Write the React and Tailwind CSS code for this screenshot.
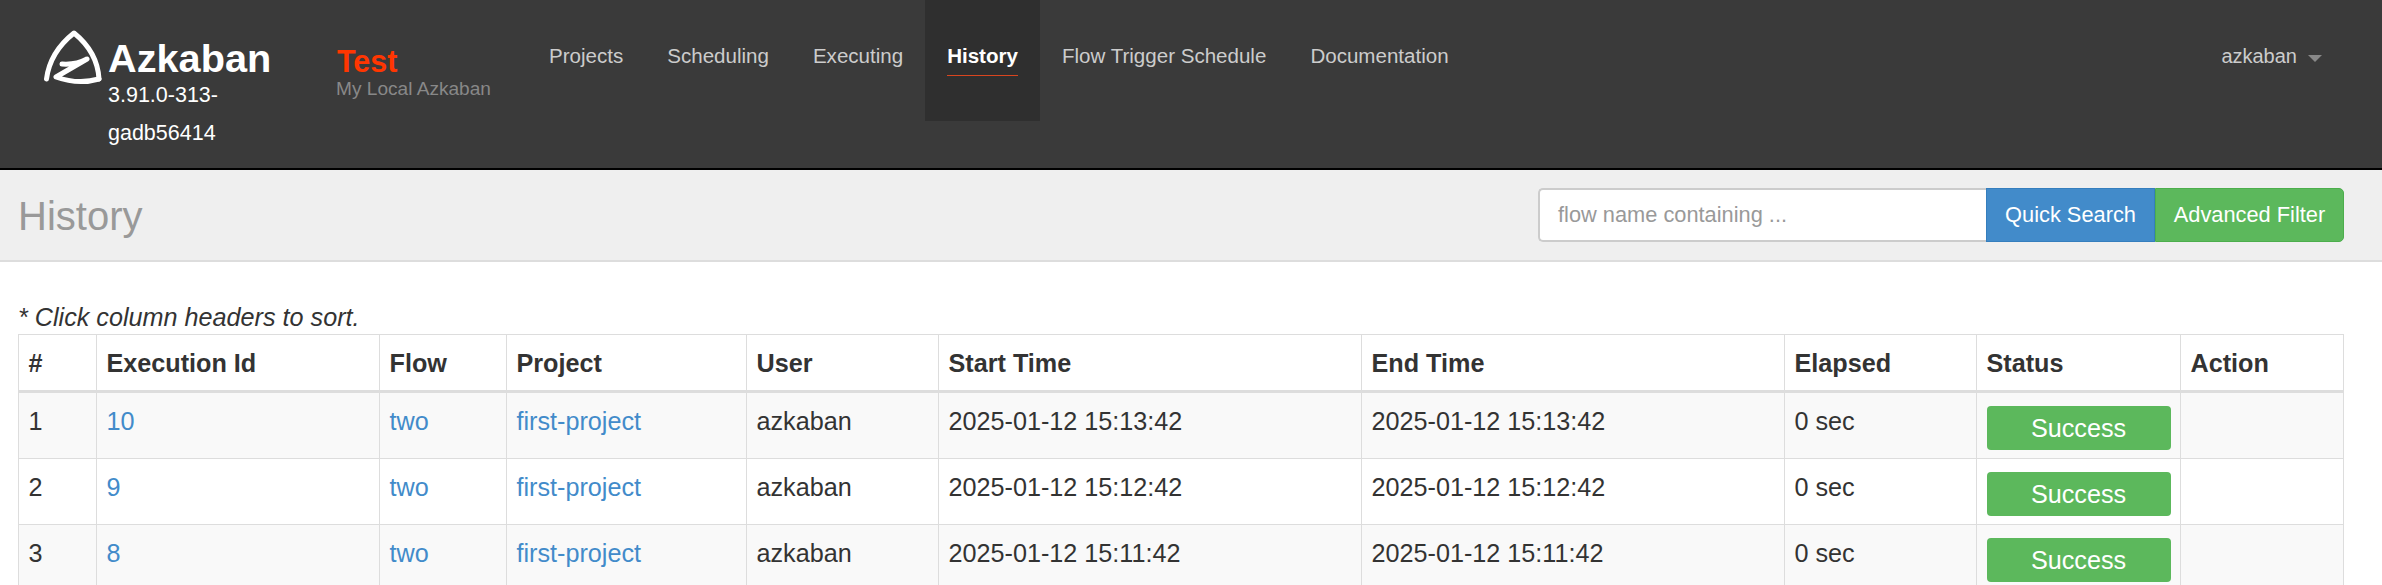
const font = { fontFamily: '"Liberation Sans", Arial, sans-serif' };

const NAV = [
  ['Projects', false],
  ['Scheduling', false],
  ['Executing', false],
  ['History', true],
  ['Flow Trigger Schedule', false],
  ['Documentation', false],
];

const COLS = [
  ['#', 'w-[78px]'],
  ['Execution Id', 'w-[283px]'],
  ['Flow', 'w-[127px]'],
  ['Project', 'w-[240px]'],
  ['User', 'w-[192px]'],
  ['Start Time', 'w-[423px]'],
  ['End Time', 'w-[423px]'],
  ['Elapsed', 'w-[192px]'],
  ['Status', 'w-[204px]'],
  ['Action', 'w-[163px]'],
];

const ROWS = [
  [1, 10, '2025-01-12 15:13:42'],
  [2, 9, '2025-01-12 15:12:42'],
  [3, 8, '2025-01-12 15:11:42'],
];

function Logo() {
  return (
    <svg width="70" height="70" viewBox="30 20 70 70" fill="none" stroke="#fff" strokeWidth="5" strokeLinecap="round" strokeLinejoin="round" className="blur-[0.6px]">
      <path d="M40.5 75 Q44 48 68 29 Q91.5 48 93 75" />
      <path d="M56 60 Q70 61 81 55 L50 73 Q72 81 93 75" />
    </svg>
  );
}

function Cell({ children, className = '' }) {
  return <td className={`border border-[#ddd] px-[9.5px] pt-[12px] align-top h-[66.5px] ${className}`}>{children}</td>;
}

export default function App() {
  return (
    <div style={font} className="h-[585px] w-[2382px] overflow-hidden bg-white text-[#333]">
      <header className="flex h-[170px] items-start border-b-2 border-black bg-[#3a3a3a]">
        <div className="flex w-[336px] shrink-0 pl-[36px] pt-[24px]">
          <div className="w-[72px] shrink-0"><Logo /></div>
          <div className="w-[130px] pt-[17px] text-white">
            <div className="text-[39.7px] font-bold leading-[35px]">Azkaban</div>
            <div className="text-[21.5px] leading-[38px]">3.91.0-313- gadb56414</div>
          </div>
        </div>
        <div className="w-[191px] shrink-0 pt-[45px]">
          <div className="ml-[1px] text-[30.5px] font-bold leading-[32px] text-[#ff3601]">Test</div>
          <div className="text-[19.1px] leading-[24px] text-[#888]">My Local Azkaban</div>
        </div>
        <nav className="flex">
          {NAV.map(([label, active]) => (
            <a key={label} className={`block h-[121px] px-[22px] pt-[42px] text-[20.55px] leading-[28px] ${active ? 'bg-[#2f2f2f] font-bold text-white' : 'text-[#ccc]'}`}>
              <span className={`inline-block pb-[5px] ${active ? 'border-b border-[#d9451f]' : ''}`}>{label}</span>
            </a>
          ))}
        </nav>
        <div className="ml-auto flex items-center gap-[11px] pr-[60px] pt-[42px] text-[20px] leading-[28px] text-[#ccc]">
          <span>azkaban</span>
          <span className="mt-[4px] h-0 w-0 border-x-[7px] border-t-[7px] border-x-transparent border-t-[#888]" />
        </div>
      </header>

      <section className="flex h-[92px] items-center justify-between border-b-2 border-[#ddd] bg-[#efefef] pl-[18px] pr-[38px]">
        <h1 className="pt-[2px] text-[40px] font-normal leading-none text-[#999]">History</h1>
        <div className="flex h-[54px] text-[21.8px]">
          <div className="flex w-[448px] items-center rounded-l-[5px] border-2 border-[#ccc] border-r-0 bg-white pl-[18px] text-[#999]">flow name containing ...</div>
          <button className="w-[169px] border border-[#357ebd] bg-[#428bca] text-white">Quick Search</button>
          <button className="w-[189px] rounded-r-[5px] border border-[#4cae4c] bg-[#5cb85c] text-white">Advanced Filter</button>
        </div>
      </section>

      <main className="pl-[18px] pr-[38px]">
        <p className="pt-[39px] text-[25.2px] italic leading-[33px]">* Click column headers to sort.</p>
        <table className="w-[2326px] table-fixed border-collapse text-[25.2px] leading-[32px]">
          <thead>
            <tr className="h-[57px]">
              {COLS.map(([label, w]) => (
                <th key={label} className={`${w} border border-b-[3px] border-[#ddd] px-[9.5px] text-left align-middle font-bold`}>{label}</th>
              ))}
            </tr>
          </thead>
          <tbody>
            {ROWS.map(([n, id, time], i) => (
              <tr key={n} className={i % 2 === 0 ? 'bg-[#f9f9f9]' : 'bg-white'}>
                <Cell>{n}</Cell>
                <Cell><a className="text-[#428bca]">{id}</a></Cell>
                <Cell><a className="text-[#428bca]">two</a></Cell>
                <Cell><a className="text-[#428bca]">first-project</a></Cell>
                <Cell>azkaban</Cell>
                <Cell>{time}</Cell>
                <Cell>{time}</Cell>
                <Cell>0 sec</Cell>
                <td className="border border-[#ddd] px-[9.5px] pt-[13px] align-top">
                  <div className="flex h-[44px] w-[184px] items-center justify-center rounded-[4px] bg-[#5cb85c] text-[25.2px] text-white">Success</div>
                </td>
                <Cell />
              </tr>
            ))}
          </tbody>
        </table>
      </main>
    </div>
  );
}
